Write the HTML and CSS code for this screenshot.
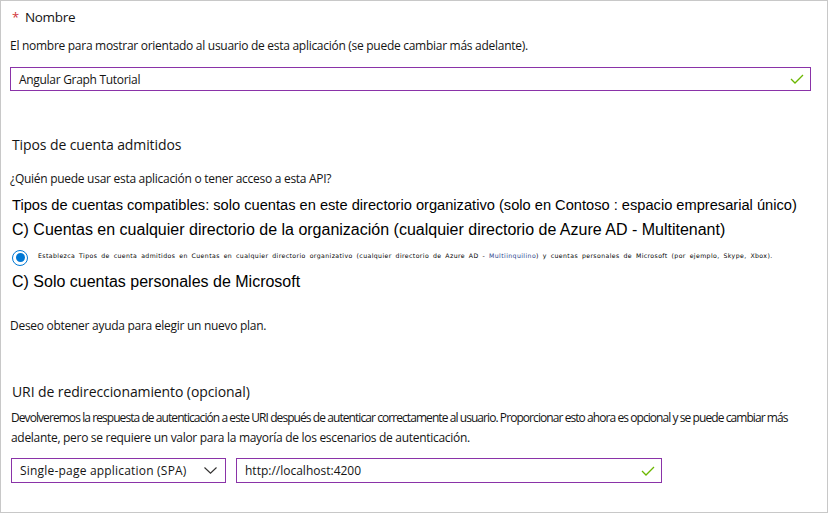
FILE: index.html
```html
<!DOCTYPE html>
<html lang="es">
<head>
<meta charset="utf-8">
<link rel="stylesheet" href="styles.css">
</head>
<body>
<div class="frame">
  <div class="label"><span class="req">*</span>Nombre</div>
  <div class="desc mt11">El nombre para mostrar orientado al usuario de esta aplicación (se puede cambiar más adelante).</div>
  <div class="field wide mt13">
    <span>Angular Graph Tutorial</span>
    <svg class="check" width="14" height="10" viewBox="0 0 14 10"><path d="M1 5 L5 9 L13 1" fill="none" stroke="#6bb700" stroke-width="1.3"/></svg>
  </div>
  <div class="heading mt44">Tipos de cuenta admitidos</div>
  <div class="desc mt16">¿Quién puede usar esta aplicación o tener acceso a esta API?</div>
  <div class="arial15 mt8">Tipos de cuentas compatibles: solo cuentas en este directorio organizativo (solo en Contoso : espacio empresarial único)</div>
  <div class="arial16 mt4">C) Cuentas en cualquier directorio de la organización (cualquier directorio de Azure AD - Multitenant)</div>
  <div class="radio-row mt4">
    <span class="radio"><span class="dot"></span></span>
    <span class="tiny">Establezca Tipos de cuenta admitidos en Cuentas en cualquier directorio organizativo (cualquier directorio de Azure AD - <span class="blue">Multiinquilino</span>) y cuentas personales de Microsoft (por ejemplo, Skype, Xbox).</span>
  </div>
  <div class="arial16 mt6">C) Solo cuentas personales de Microsoft</div>
  <div class="desc mt25">Deseo obtener ayuda para elegir un nuevo plan.</div>
  <div class="heading mt48">URI de redireccionamiento (opcional)</div>
  <div class="para mt6">
    <span class="line1">Devolveremos la respuesta de autenticación a este URI después de autenticar correctamente al usuario. Proporcionar esto ahora es opcional y se puede cambiar más</span>
    <span class="line2">adelante, pero se requiere un valor para la mayoría de los escenarios de autenticación.</span>
  </div>
  <div class="row mt10">
    <div class="field select">
      <span>Single-page application (SPA)</span>
      <svg class="chev" width="13" height="7" viewBox="0 0 13 7"><path d="M0.5 0.5 L6.5 6.2 L12.5 0.5" fill="none" stroke="#323130" stroke-width="1.1"/></svg>
    </div>
    <div class="field uri">
      <span>http://localhost:4200</span>
      <svg class="check" width="14" height="10" viewBox="0 0 14 10"><path d="M1 5 L5 9 L13 1" fill="none" stroke="#6bb700" stroke-width="1.3"/></svg>
    </div>
  </div>
</div>
</body>
</html>
```
FILE: styles.css
```css
* { box-sizing: border-box; }
html, body { margin: 0; padding: 0; background: #fff; }
body { font-family: "Open Sans", "Liberation Sans", sans-serif; color: #141414; }
.frame {
  width: 828px;
  height: 513px;
  border: 1px solid #c8c8c8;
  padding: 6px 0 0 9px;
  display: flex;
  flex-direction: column;
  align-items: flex-start;
}
.mt4 { margin-top: 4px; }
.mt6 { margin-top: 6px; }
.mt8 { margin-top: 8px; }
.mt10 { margin-top: 10px; }
.mt11 { margin-top: 11px; }
.mt13 { margin-top: 13px; }
.mt16 { margin-top: 16px; }
.mt25 { margin-top: 25px; }
.mt44 { margin-top: 44px; }
.mt48 { margin-top: 48px; }
.label { height: 20px; line-height: 20px; font-size: 13.5px; padding-left: 2px; letter-spacing: -0.3px; }
.req { color: #d13438; font-size: 13px; margin-right: 6px; }
.desc { height: 16px; line-height: 16px; font-size: 12px; letter-spacing: -0.28px; }
.field {
  height: 24px;
  border: 1px solid #8a33a8;
  display: flex;
  align-items: center;
  justify-content: space-between;
  padding: 0 6px 0 8px;
  font-size: 12px;
}
.wide { width: 801px; }
.wide span { letter-spacing: -0.3px; }
.check { display: block; }
.heading { height: 20px; line-height: 20px; font-size: 14px; padding-left: 2px; letter-spacing: -0.1px; }
.arial15 { font-family: "Liberation Sans", Arial, sans-serif; font-size: 14.65px; height: 20px; line-height: 20px; padding-left: 2px; color: #000; }
.arial16 { font-family: "Liberation Sans", Arial, sans-serif; font-size: 16px; height: 22px; line-height: 22px; padding-left: 2px; color: #000; }
.radio-row { height: 20px; display: flex; align-items: center; gap: 10px; padding-left: 2px; }
.radio {
  width: 16px; height: 16px; border: 1px solid #0078d4; border-radius: 50%;
  display: flex; align-items: center; justify-content: center; margin-top: 5px;
}
.dot { width: 9px; height: 9px; border-radius: 50%; background: #0078d4; }
.tiny { font-family: "DejaVu Sans", Verdana, sans-serif; font-size: 6.2px; letter-spacing: 0.4px; word-spacing: 1.5px; color: #000; }
.blue { color: #2a3f8c; }
.para { font-size: 12px; line-height: 20px; display: flex; flex-direction: column; padding-left: 1px; }
.para span { white-space: nowrap; }
.line1 { letter-spacing: -0.93px; }
.line2 { letter-spacing: -0.3px; }
.row { display: flex; gap: 10px; height: 25px; padding-left: 1px; }
.row .field { height: 25px; }
.select { width: 215px; padding-right: 8px; letter-spacing: 0.2px; }
.uri { width: 426px; }
```
